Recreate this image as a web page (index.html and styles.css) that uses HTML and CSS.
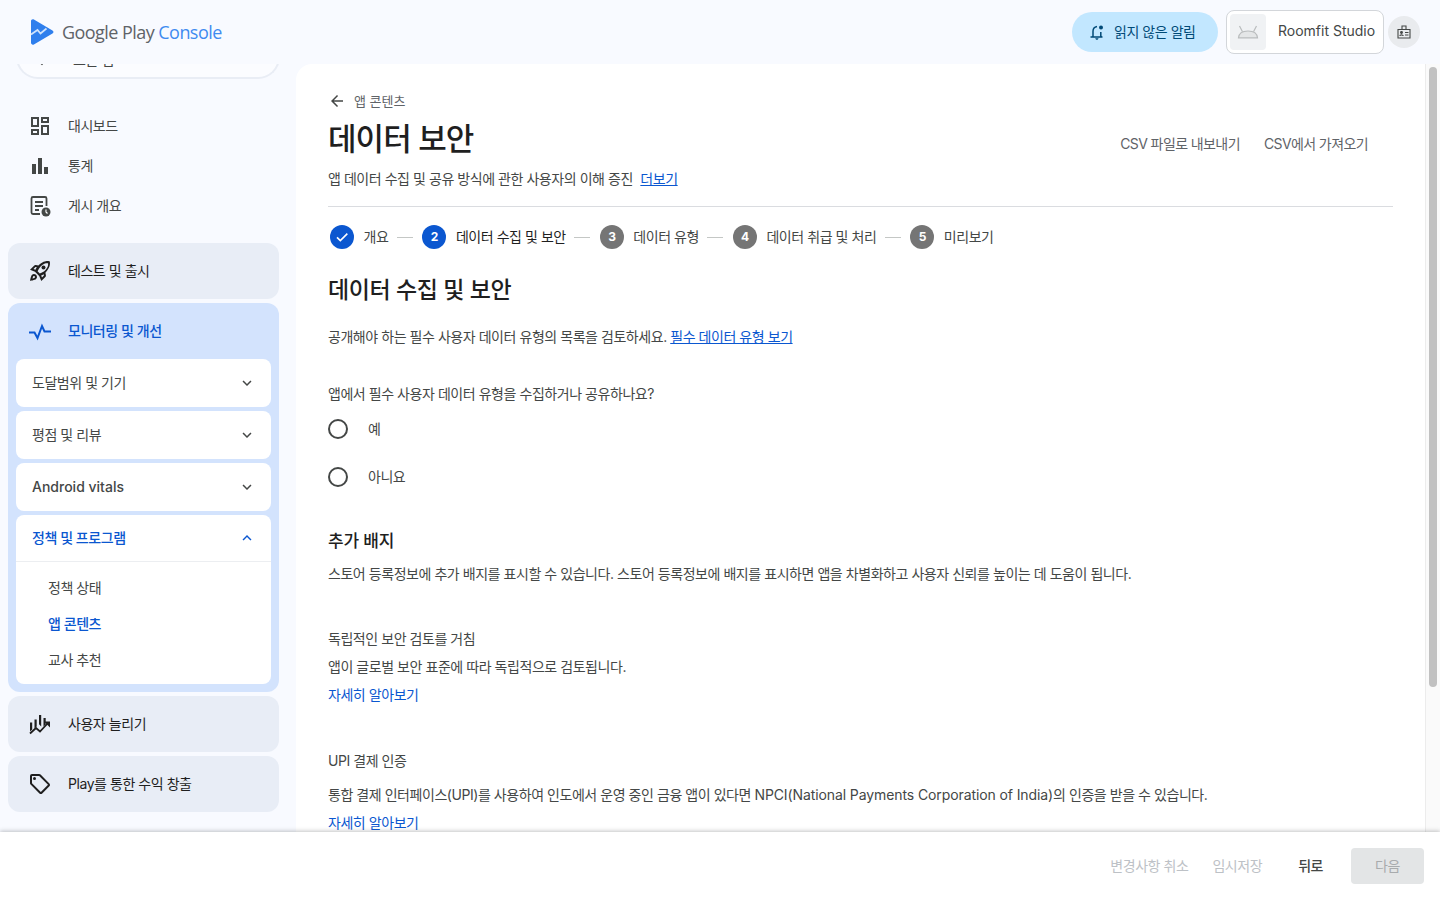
FILE: index.html
```html
<!DOCTYPE html>
<html lang="ko">
<head>
  <meta charset="UTF-8">
  <title>데이터 보안 - Google Play Console</title>
  <link rel="stylesheet" href="styles.css">
</head>
<body>
  <header class="topbar">
    <div class="logo">
      <svg class="logo-mark" width="24" height="26" viewBox="0 0 24 26"><path fill="#2f7fed" d="M1 2.200C1 .6 2.600-.2 3.900.6l18.600 10.900c1.300.8 1.300 2.300 0 3.100L3.900 25.400C2.600 26.200 1 25.300 1 23.800z"/><path fill="none" stroke="#cfe3fc" stroke-width="1.700" d="M1 15.500l6.500-4.500 3 3.500 6-5"/></svg>
      <span class="logo-text">Google Play <b>Console</b></span>
    </div>
    <div class="topbar-right">
      <button class="alert-pill">
        <svg width="18" height="18" viewBox="0 0 18 18"><path fill="none" stroke="#004a77" stroke-width="1.500" d="M2.500 14h12M4.500 14l.5-1V8.200C5 5.700 6.600 3.800 9 3.400M12.800 9v4l.7 1"/><path fill="#004a77" d="M7.300 15.300h3.200c0 .9-.7 1.500-1.600 1.500s-1.600-.6-1.600-1.500z"/><circle cx="13" cy="4.600" r="2" fill="#004a77"/></svg>
        <span>읽지 않은 알림</span>
      </button>
      <div class="app-chip">
        <span class="app-icon">
          <svg width="22" height="14" viewBox="0 0 22 14" fill="#e4e6e7" stroke="#b9bcbd" stroke-width="1.200"><path d="M1.500 12.800c.4-4 3.800-6.800 9.500-6.800s9.100 2.800 9.500 6.800z"/><path d="M5.500 6.800L2.500 1M16.500 6.800l3-5.800"/></svg>
        </span>
        <span class="app-name">Roomfit Studio</span>
      </div>
      <span class="account-btn">
        <svg width="16" height="16" viewBox="0 0 16 16" fill="none" stroke="#444746" stroke-width="1.100"><path d="M2 5.500h12v8.500H2zM6 5.500V2h4v3.500"/><circle cx="5.500" cy="8.500" r=".9" fill="#444746"/><path d="M3.800 12c0-1.500 3.400-1.500 3.400 0M9 8.500h3.500M9 11h3.500"/></svg>
      </span>
    </div>
  </header>

  <div class="workspace">
    <nav class="sidebar">
      <div class="app-search">
        <svg width="16" height="16" viewBox="0 0 24 24"><path fill="#444746" d="M20 11H7.830l5.590-5.590L12 4l-8 8 8 8 1.410-1.410L7.830 13H20z"/></svg>
        <span>모든 앱</span>
      </div>

      <ul class="top-links">
        <li>
          <svg width="24" height="24" viewBox="0 0 24 24"><path fill="#444746" d="M19 5v2h-4V5h4M9 5v6H5V5h4m10 8v6h-4v-6h4M9 17v2H5v-2h4M21 3h-8v6h8V3zM11 3H3v10h8V3zm10 8h-8v10h8V11zm-10 4H3v6h8v-6z"/></svg>
          대시보드
        </li>
        <li>
          <svg width="24" height="24" viewBox="0 0 24 24"><path fill="#444746" d="M4 10h4v10H4zM10 4h4v16h-4zM16 13h4v7h-4z"/></svg>
          통계
        </li>
        <li>
          <svg width="24" height="24" viewBox="0 0 24 24"><path fill="none" stroke="#444746" stroke-width="1.800" d="M12 20H5a1.500 1.500 0 0 1-1.500-1.500v-14A1.500 1.500 0 0 1 5 3h12a1.500 1.500 0 0 1 1.500 1.500V12M7 8h8M7 12h8M7 16h4"/><circle cx="18" cy="18" r="4.500" fill="#444746"/><path stroke="#fff" stroke-width="1.200" d="M18 15.500V18l1.500 1.500"/></svg>
          게시 개요
        </li>
      </ul>

      <div class="nav-group">
        <svg width="24" height="24" viewBox="0 0 24 24"><path fill="#1f1f1f" fill-rule="evenodd" d="M6 15c-.830 0-1.580.340-2.120.880C2.700 17.060 2 22 2 22s4.940-.700 6.120-1.880A2.996 2.996 0 0 0 6 15zm.710 3.710c-.280.280-2.170.760-2.170.760s.470-1.880.760-2.170c.170-.190.420-.300.700-.300a1.003 1.003 0 0 1 .710 1.710zm10.710-5.060c6.360-6.360 4.240-11.310 4.240-11.310S16.710.220 10.350 6.580l-2.490-.500a2.030 2.030 0 0 0-1.810.550L2 10.690l5 2.140L11.170 17l2.140 5 4.050-4.050c.470-.470.680-1.150.550-1.810zM7.410 10.830l-1.920-.820 1.930-1.930 1.440.290c-.570.830-1.080 1.700-1.450 2.460zm6.580 7.680l-.820-1.920c.760-.370 1.640-.880 2.460-1.450l.290 1.440zM11.760 14.400L9.600 12.240c.570-1.210 1.900-3.650 3.230-4.980 3.400-3.400 6.100-3.200 7.200-3 .200 1.100.400 3.800-3 7.200-1.330 1.330-3.770 2.660-5.270 2.940z"/><circle cx="15.500" cy="8.500" r="2" fill="#1f1f1f"/></svg>
        <span>테스트 및 출시</span>
      </div>

      <div class="nav-group-open">
        <div class="nav-group-head">
          <svg width="24" height="24" viewBox="0 0 24 24"><path fill="none" stroke="#0b57d0" stroke-width="2" d="M1 13.500h5.500l3 5.500 4.500-12 2.500 5.500H23"/></svg>
          <span>모니터링 및 개선</span>
        </div>
        <div class="sub-card">
          <span>도달범위 및 기기</span>
          <svg class="chevron" width="18" height="18" viewBox="0 0 24 24"><path d="M7.410 8.590L12 13.170l4.590-4.580L18 10l-6 6-6-6z"/></svg>
        </div>
        <div class="sub-card">
          <span>평점 및 리뷰</span>
          <svg class="chevron" width="18" height="18" viewBox="0 0 24 24"><path d="M7.410 8.590L12 13.170l4.590-4.580L18 10l-6 6-6-6z"/></svg>
        </div>
        <div class="sub-card">
          <span class="latin-medium">Android vitals</span>
          <svg class="chevron" width="18" height="18" viewBox="0 0 24 24"><path d="M7.410 8.590L12 13.170l4.590-4.580L18 10l-6 6-6-6z"/></svg>
        </div>
        <div class="sub-panel">
          <div class="sub-panel-head">
            <span>정책 및 프로그램</span>
            <svg class="chevron" width="18" height="18" viewBox="0 0 24 24"><path d="M7.410 15.410L12 10.830l4.590 4.580L18 14l-6-6-6 6z"/></svg>
          </div>
          <ul class="sub-links">
            <li>정책 상태</li>
            <li class="current">앱 콘텐츠</li>
            <li>교사 추천</li>
          </ul>
        </div>
      </div>

      <div class="nav-group">
        <svg width="24" height="24" viewBox="0 0 24 24"><path fill="#1f1f1f" d="M2 10.500h2.200v7L2 19.500zM6.500 7.500h2.200v7l-2.200 2zM11 3h2.200v11.500l-2.200-2.200zM15.500 6h2.200v6.500l-2.200 2z"/><path fill="none" stroke="#1f1f1f" stroke-width="1.800" d="M2 21.500l6-5.500 4 3.500 8-8.500"/><path fill="#1f1f1f" d="M16 9.500h6v6z"/></svg>
        <span>사용자 늘리기</span>
      </div>
      <div class="nav-group">
        <svg width="24" height="24" viewBox="0 0 24 24"><path fill="#1f1f1f" d="M21.410 11.410l-8.830-8.830A2 2 0 0 0 11.170 2H4a2 2 0 0 0-2 2v7.170c0 .530.210 1.040.590 1.410l8.830 8.830c.780.780 2.050.780 2.830 0l7.170-7.170c.780-.780.780-2.040-.010-2.830zM12.830 20L4 11.170V4h7.170L20 12.830 12.830 20z"/><circle cx="6.500" cy="6.500" r="1.500" fill="#1f1f1f"/></svg>
        <span>Play를 통한 수익 창출</span>
      </div>
    </nav>

    <main class="panel">
      <div class="content">
        <div class="crumb">
          <svg width="18" height="18" viewBox="0 0 24 24"><path fill="#444746" d="M20 11H7.830l5.590-5.590L12 4l-8 8 8 8 1.410-1.410L7.830 13H20z"/></svg>
          <span>앱 콘텐츠</span>
        </div>
        <div class="page-head">
          <div>
            <h1>데이터 보안</h1>
            <p class="page-sub">앱 데이터 수집 및 공유 방식에 관한 사용자의 이해 증진 <a href="#">더보기</a></p>
          </div>
          <div class="page-actions">
            <span>CSV 파일로 내보내기</span>
            <span>CSV에서 가져오기</span>
          </div>
        </div>

        <ol class="stepper">
          <li class="step">
            <span class="step-num done"><svg width="16" height="16" viewBox="0 0 24 24"><path fill="none" stroke="#fff" stroke-width="2.400" d="M4.500 12.500l5 5L20 7"/></svg></span>
            <span>개요</span>
          </li>
          <li class="step active"><span class="step-num">2</span><span>데이터 수집 및 보안</span></li>
          <li class="step"><span class="step-num">3</span><span>데이터 유형</span></li>
          <li class="step"><span class="step-num">4</span><span>데이터 취급 및 처리</span></li>
          <li class="step"><span class="step-num">5</span><span>미리보기</span></li>
        </ol>

        <h2>데이터 수집 및 보안</h2>
        <p class="intro">공개해야 하는 필수 사용자 데이터 유형의 목록을 검토하세요. <a href="#">필수 데이터 유형 보기</a></p>

        <p class="question">앱에서 필수 사용자 데이터 유형을 수집하거나 공유하나요?</p>
        <label class="radio"><span class="radio-dot"></span>예</label>
        <label class="radio"><span class="radio-dot"></span>아니요</label>

        <h3>추가 배지</h3>
        <p class="badge-intro">스토어 등록정보에 추가 배지를 표시할 수 있습니다. 스토어 등록정보에 배지를 표시하면 앱을 차별화하고 사용자 신뢰를 높이는 데 도움이 됩니다.</p>

        <section class="badge">
          <p>독립적인 보안 검토를 거침</p>
          <p>앱이 글로벌 보안 표준에 따라 독립적으로 검토됩니다.</p>
          <p><a class="plain" href="#">자세히 알아보기</a></p>
        </section>
        <section class="badge">
          <p class="badge-title">UPI 결제 인증</p>
          <p>통합 결제 인터페이스(UPI)를 사용하여 인도에서 운영 중인 금융 앱이 있다면 <span class="latin">NPCI(National Payments Corporation of India)</span>의 인증을 받을 수 있습니다.</p>
          <p><a class="plain" href="#">자세히 알아보기</a></p>
        </section>
      </div>
    </main>

    <div class="scrollbar"><div class="scrollbar-thumb"></div></div>
  </div>

  <footer class="bottombar">
    <button class="btn-text muted">변경사항 취소</button>
    <button class="btn-text muted">임시저장</button>
    <button class="btn-text back">뒤로</button>
    <button class="btn-next">다음</button>
  </footer>
</body>
</html>
```

FILE: styles.css
```css
* {
  box-sizing: border-box;
}
html, body {
  height: 100%;
}
body {
  margin: 0;
  display: flex;
  flex-direction: column;
  overflow: hidden;
  background: #f8faff;
  color: #1f1f1f;
  font-family: Inter, "Noto Sans CJK KR", sans-serif;
  font-size: 14px;
  line-height: 20px;
  letter-spacing: -0.45px;
}
ul, ol {
  list-style: none;
  margin: 0;
  padding: 0;
}
p, h1, h2, h3 {
  margin: 0;
  font-weight: 400;
}
a {
  color: #0b57d0;
}
button {
  font: inherit;
  letter-spacing: inherit;
  border: 0;
  background: none;
}
.latin {
  letter-spacing: -0.1px;
}
.latin-medium {
  letter-spacing: 0;
  font-weight: 500;
}

/* top bar */
.topbar {
  height: 64px;
  flex: none;
  display: flex;
  align-items: center;
  justify-content: space-between;
  padding: 0 20px 0 30px;
}
.logo {
  display: flex;
  align-items: center;
  gap: 8px;
}
.logo-text {
  font-family: "Open Sans", sans-serif;
  font-size: 18px;
  letter-spacing: -0.55px;
  color: #5f6368;
}
.logo-text b {
  font-weight: 400;
  color: #3f8bf0;
}
.topbar-right {
  display: flex;
  align-items: center;
  gap: 8px;
}
.alert-pill {
  width: 146px;
  height: 40px;
  padding-left: 16px;
  border-radius: 20px;
  background: #c2e7ff;
  color: #004a77;
  display: flex;
  align-items: center;
  gap: 8px;
}
.app-chip {
  width: 158px;
  height: 44px;
  background: #fff;
  border: 1px solid #d3d6da;
  border-radius: 8px;
  padding: 3px;
  display: flex;
  align-items: center;
  gap: 12px;
}
.app-icon {
  width: 36px;
  height: 36px;
  border-radius: 4px;
  background: #f0f2f4;
  display: flex;
  align-items: center;
  justify-content: center;
}
.app-name {
  color: #444746;
  white-space: nowrap;
  letter-spacing: 0;
  margin-top: -2px;
}
.account-btn {
  width: 32px;
  height: 32px;
  border-radius: 50%;
  background: #e9ebee;
  display: flex;
  align-items: center;
  justify-content: center;
  margin-left: -4px;
}

/* middle row */
.workspace {
  flex: 1;
  min-height: 0;
  display: flex;
  overflow: hidden;
}
.sidebar {
  width: 296px;
  flex: none;
  padding: 0 17px 0 8px;
}
.app-search {
  margin: -30px -1px 0 8px;
  height: 45px;
  padding: 9px 0 0 16px;
  background: #fbfcff;
  border: 2px solid #e9edf5;
  border-top: 0;
  border-radius: 0 0 22px 22px;
  display: flex;
  align-items: center;
  gap: 23px;
  color: #444746;
}
.top-links {
  margin-top: 27px;
  margin-bottom: 17px;
}
.top-links li {
  height: 40px;
  display: flex;
  align-items: center;
  gap: 16px;
  padding-left: 20px;
  color: #444746;
}
.nav-group {
  height: 56px;
  margin-bottom: 4px;
  border-radius: 12px;
  background: #e8edf6;
  display: flex;
  align-items: center;
  gap: 16px;
  padding-left: 20px;
}
.nav-group-open {
  margin-bottom: 4px;
  padding: 0 8px 8px;
  border-radius: 12px;
  background: #d3e3fd;
}
.nav-group-head {
  height: 56px;
  display: flex;
  align-items: center;
  gap: 16px;
  padding-left: 12px;
  color: #0b57d0;
  font-weight: 500;
}
.sub-card {
  height: 48px;
  margin-bottom: 4px;
  padding: 0 15px 0 16px;
  background: #fff;
  border-radius: 8px;
  display: flex;
  align-items: center;
  justify-content: space-between;
  color: #444746;
}
.chevron {
  fill: #444746;
}
.sub-panel {
  background: #fff;
  border-radius: 8px;
  padding-bottom: 6px;
}
.sub-panel-head {
  height: 47px;
  padding: 0 15px 0 16px;
  border-bottom: 1px solid #eceef1;
  display: flex;
  align-items: center;
  justify-content: space-between;
  color: #0b57d0;
  font-weight: 500;
}
.sub-panel-head .chevron {
  fill: #0b57d0;
}
.sub-links {
  padding-top: 8px;
}
.sub-links li {
  height: 36px;
  padding-left: 32px;
  display: flex;
  align-items: center;
  color: #444746;
}
.sub-links .current {
  color: #0b57d0;
  font-weight: 500;
}

/* main panel */
.panel {
  flex: 1;
  min-width: 0;
  background: #fff;
  border-radius: 16px 0 0 0;
  overflow: hidden;
}
.content {
  padding: 27px 32px 0;
}
.crumb {
  display: flex;
  align-items: center;
  gap: 8px;
  color: #5f6368;
  font-size: 13px;
  letter-spacing: 0;
  height: 20px;
}
.page-head {
  display: flex;
  justify-content: space-between;
  height: 96px;
  border-bottom: 1px solid #dadce0;
}
h1 {
  font-size: 31px;
  font-weight: 500;
  letter-spacing: -0.9px;
  line-height: 40px;
  margin-top: 8px;
}
.page-sub {
  margin-top: 10px;
  color: #444746;
}
.page-sub a {
  margin-left: 4px;
}
.page-actions {
  display: flex;
  gap: 24px;
  padding: 23px 25px 0 0;
  color: #5f6368;
  letter-spacing: -0.6px;
}
.stepper {
  display: flex;
  align-items: center;
  margin-top: 18px;
  padding-left: 2px;
  height: 24px;
}
.step {
  display: flex;
  align-items: center;
  gap: 9.500px;
  color: #444746;
}
.step + .step::before {
  content: "";
  width: 16px;
  height: 1px;
  background: #c4c7c5;
  margin-left: 8.500px;
}
.step-num {
  width: 24px;
  height: 24px;
  border-radius: 50%;
  background: #757575;
  color: #fff;
  font-size: 12px;
  font-weight: 700;
  display: flex;
  align-items: center;
  justify-content: center;
}
.step-num.done,
.step.active .step-num {
  background: #0b57d0;
}
.step.active {
  color: #1f1f1f;
}
h2 {
  font-size: 23px;
  font-weight: 500;
  letter-spacing: -0.4px;
  line-height: 32px;
  margin-top: 25px;
}
.intro {
  margin-top: 21px;
  color: #444746;
}
.question {
  margin-top: 37px;
  margin-bottom: 1px;
  color: #444746;
}
.radio {
  display: flex;
  align-items: center;
  gap: 20px;
  height: 48px;
  color: #444746;
}
.radio-dot {
  width: 20px;
  height: 20px;
  border: 2px solid #444746;
  border-radius: 50%;
}
h3 {
  font-size: 17px;
  font-weight: 500;
  letter-spacing: -0.2px;
  line-height: 24px;
  margin-top: 28px;
}
.badge-intro {
  margin-top: 11px;
  color: #444746;
}
.badge {
  margin-top: 45px;
  color: #444746;
}
.badge + .badge {
  margin-top: 46px;
}
.badge p {
  margin-bottom: 8px;
}
.badge .badge-title {
  margin-bottom: 14px;
}
.plain {
  text-decoration: none;
}

/* scrollbar */
.scrollbar {
  width: 15px;
  flex: none;
  background: #fafafa;
  border-left: 1px solid #ececec;
  padding: 3px 3px 0 3px;
}
.scrollbar-thumb {
  width: 8px;
  height: 620px;
  border-radius: 4px;
  background: #c1c1c1;
}

/* bottom bar */
.bottombar {
  height: 68px;
  flex: none;
  position: relative;
  background: #fff;
  box-shadow: 0 -1px 4px rgba(60, 64, 67, 0.3);
  display: flex;
  align-items: center;
  justify-content: flex-end;
  padding-right: 16px;
}
.btn-text {
  padding: 0 12px;
  height: 36px;
  color: #444746;
}
.btn-text.muted {
  color: #bdc1c6;
}
.btn-text.back {
  margin: 0 16px 0 12px;
  font-weight: 500;
}
.btn-next {
  width: 73px;
  height: 36px;
  border-radius: 4px;
  background: #e3e5e6;
  color: #a8abad;
}
```
